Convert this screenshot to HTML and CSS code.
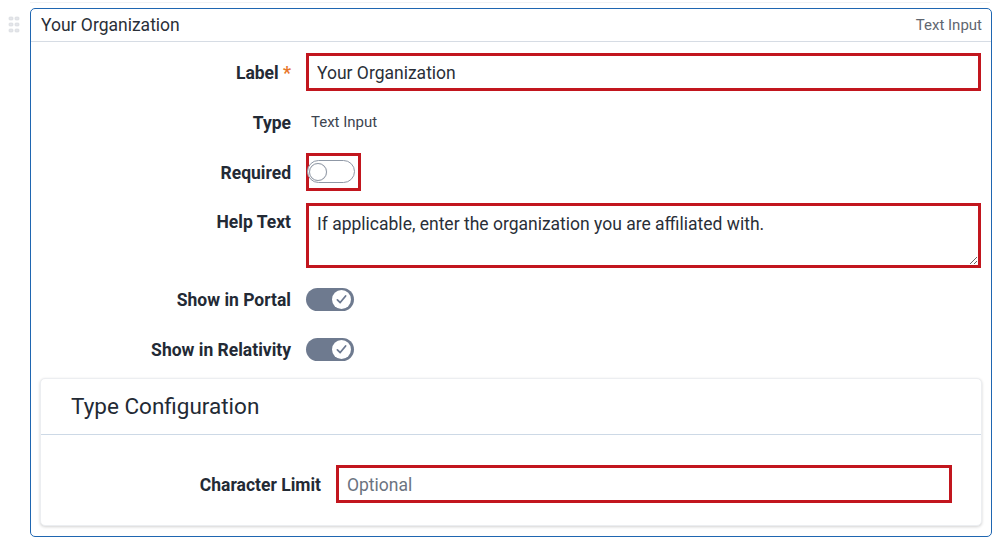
FILE: index.html
```html
<!DOCTYPE html>
<html>
<head>
<meta charset="utf-8">
<link rel="stylesheet" href="styles.css">
</head>
<body>
<div class="topline"></div>
<div class="wrap">
  <div class="handle">
    <svg width="12" height="20" viewBox="0 0 12 20">
      <rect x="1" y="1" width="4" height="3" rx="1" class="dot"/>
      <rect x="7" y="1" width="4" height="3" rx="1" class="dot"/>
      <rect x="1" y="7" width="4" height="3" rx="1" class="dot"/>
      <rect x="7" y="7" width="4" height="3" rx="1" class="dot"/>
      <rect x="1" y="13" width="4" height="3" rx="1" class="dot"/>
      <rect x="7" y="13" width="4" height="3" rx="1" class="dot"/>
    </svg>
  </div>
  <div class="card">
    <div class="card-head">
      <span class="card-title">Your Organization</span>
      <span class="card-type">Text Input</span>
    </div>
    <div class="form">
      <div class="lbl">Label <span class="req">*</span></div>
      <div class="field"><input class="txt mark" type="text" value="Your Organization"></div>

      <div class="lbl">Type</div>
      <div class="field"><span class="val">Text Input</span></div>

      <div class="lbl">Required</div>
      <div class="field">
        <div class="markbox">
          <span class="toggle off"><span class="knob"></span></span>
        </div>
      </div>

      <div class="lbl top">Help Text</div>
      <div class="field"><textarea class="area mark">If applicable, enter the organization you are affiliated with.</textarea></div>

      <div class="lbl">Show in Portal</div>
      <div class="field">
        <span class="toggle on"><span class="knob"><svg width="13" height="13" viewBox="0 0 12 12"><path d="M2.2 6.3 L4.8 8.8 L9.8 2.8" fill="none" stroke="#6b7890" stroke-width="1.6" stroke-linecap="round" stroke-linejoin="round"/></svg></span></span>
      </div>

      <div class="lbl">Show in Relativity</div>
      <div class="field">
        <span class="toggle on"><span class="knob"><svg width="13" height="13" viewBox="0 0 12 12"><path d="M2.2 6.3 L4.8 8.8 L9.8 2.8" fill="none" stroke="#6b7890" stroke-width="1.6" stroke-linecap="round" stroke-linejoin="round"/></svg></span></span>
      </div>
    </div>
    <div class="panel">
      <div class="panel-head">Type Configuration</div>
      <div class="panel-body">
        <div class="lbl">Character Limit</div>
        <div class="field"><input class="txt mark" type="text" placeholder="Optional"></div>
      </div>
    </div>
  </div>
</div>
</body>
</html>
```
FILE: styles.css
```css
* { box-sizing: border-box; }
html, body { margin: 0; padding: 0; background: #fff; }
body {
  font-family: Roboto, "Liberation Sans", Arial, sans-serif;
  color: #2a2f38;
  width: 1000px;
  height: 542px;
  overflow: hidden;
}
.topline {
  height: 3px;
  margin: 0 10px 0 30px;
  border-bottom: 1px solid #f1f2f4;
}
.wrap {
  display: flex;
  margin-top: 5px;
  padding-right: 8px;
}
.handle {
  width: 30px;
  flex: none;
  padding: 8px 0 0 8px;
}
.handle svg { display: block; }
.dot { fill: #e4e6ea; stroke: #d3d7dc; stroke-width: 0.6; }
.card {
  flex: 1;
  border: 1px solid #1f66b1;
  border-radius: 5px;
  padding-bottom: 10px;
}
.card-head {
  height: 33px;
  border-bottom: 1px solid #d6dce4;
  display: flex;
  align-items: center;
  justify-content: space-between;
  padding: 0 9px 1px 10px;
}
.card-title { font-size: 17.5px; color: #2a2f38; }
.card-type { font-size: 15px; color: #5f6670; }
.form {
  display: grid;
  grid-template-columns: 260px 1fr;
  column-gap: 15px;
  row-gap: 12px;
  padding: 11px 10px 0 0;
}
.lbl {
  font-weight: 700;
  font-size: 17.5px;
  color: #232a35;
  text-align: right;
  align-self: center;
  line-height: 20px;
  padding-top: 1px;
}
.lbl.top { align-self: start; padding-top: 9px; }
.req { color: #e8762b; font-weight: 700; }
.field {
  min-height: 38px;
  display: flex;
  align-items: center;
}
.mark { border: 3px solid #c2161e; }
.txt {
  width: 100%;
  height: 38px;
  padding: 1px 8px 0;
  font-family: Roboto, "Liberation Sans", Arial, sans-serif;
  font-size: 17.5px;
  color: #2a2f38;
  outline: none;
  background: #fff;
  border-radius: 0;
}
.txt::placeholder { color: #6b7380; opacity: 1; }
.val {
  font-size: 15px;
  color: #3d4450;
  padding-left: 5px;
}
.markbox {
  width: 55px;
  height: 38px;
  border: 3px solid #c2161e;
  display: flex;
  align-items: center;
  padding-bottom: 1px;
}
.toggle {
  display: inline-flex;
  align-items: center;
  width: 48px;
  height: 23px;
  border-radius: 12px;
  position: relative;
}
.markbox .toggle { margin-left: -2px; }
.toggle.off {
  background: #fff;
  border: 1px solid #8f98a6;
  padding-left: 1px;
}
.toggle.off .knob {
  width: 18px;
  height: 18px;
  border-radius: 50%;
  border: 1px solid #8f98a6;
  background: #fff;
  box-shadow: 0 0 1px rgba(0,0,0,0.2);
}
.toggle.on {
  background: #6e7a8f;
  justify-content: flex-end;
  padding-right: 3px;
}
.toggle.on .knob {
  width: 19px;
  height: 19px;
  border-radius: 50%;
  background: #fff;
  display: flex;
  align-items: center;
  justify-content: center;
}
.toggle .knob svg { display: block; }
.area {
  width: 100%;
  height: 65px;
  padding: 8px 8px;
  font-family: Roboto, "Liberation Sans", Arial, sans-serif;
  font-size: 17.5px;
  line-height: 20px;
  color: #2a2f38;
  outline: none;
  resize: vertical;
  border-radius: 0;
  display: block;
}
.panel {
  margin: 10px 9px 0 9px;
  border: 1px solid #eceef1;
  border-radius: 5px;
  box-shadow: 0 1px 3px rgba(0,0,0,0.18);
  background: #fff;
}
.panel-head {
  height: 56px;
  border-bottom: 1px solid #cdd9e6;
  display: flex;
  align-items: center;
  padding: 0 0 2px 30px;
  font-size: 22.5px;
  color: #232a35;
}
.panel-body {
  display: grid;
  grid-template-columns: 280px 1fr;
  column-gap: 15px;
  padding: 30px 29px 22px 0;
}
```
